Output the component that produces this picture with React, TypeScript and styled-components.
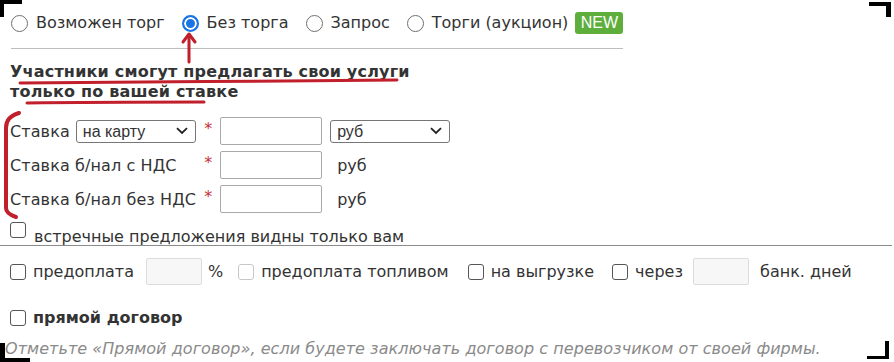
import React from "react";
import styled, { createGlobalStyle } from "styled-components";

const GlobalStyle = createGlobalStyle`
  html, body { margin: 0; padding: 0; background: #fff; }
  body {
    font-family: "DejaVu Sans", Verdana, sans-serif;
    font-size: 16px;
    color: #333;
  }
  * { box-sizing: border-box; }
`;

const Page = styled.div`
  position: relative;
  width: 894px;
  height: 362px;
  overflow: hidden;
  padding-top: 12px;
`;

const RadioRow = styled.div`
  display: flex;
  align-items: center;
  gap: 17px;
  height: 22px;
  padding-left: 11px;
`;

const OptionLabel = styled.label`
  display: inline-flex;
  align-items: center;
  gap: 8px;
  white-space: nowrap;
  line-height: 20px;
`;

const Radio = styled.input.attrs({ type: "radio" })`
  appearance: none;
  margin: 0;
  width: 17px;
  height: 17px;
  border-radius: 50%;
  border: 1px solid #6f6f6f;
  background: #fff;
  flex: none;
  &:checked {
    border: 2px solid #1b74e4;
    background: #1b74e4;
    box-shadow: inset 0 0 0 2px #fff;
  }
`;

const NewBadge = styled.span`
  display: inline-flex;
  align-items: center;
  justify-content: center;
  width: 48px;
  height: 22px;
  margin-left: -10px;
  border-radius: 3px;
  background: #5eae3c;
  color: #fff;
  font-family: "Liberation Sans", Arial, sans-serif;
  font-size: 16px;
`;

const Divider = styled.div`
  margin: 14px 0 0 11px;
  width: 612px;
  height: 1px;
  background: #bdbdbd;
`;

const Heading = styled.div`
  margin: 13px 0 0 10px;
  font-weight: bold;
  line-height: 20px;
  letter-spacing: 0.2px;
  color: #333;
`;

const RateGrid = styled.div`
  display: grid;
  grid-template-columns: auto auto 102px auto;
  justify-content: start;
  column-gap: 8px;
  row-gap: 6px;
  align-items: center;
  margin: 15px 0 0 10px;
`;

const RateLabel = styled.div`
  display: flex;
  align-items: center;
  gap: 6px;
  white-space: nowrap;
  height: 28px;
  letter-spacing: 0.1px;
`;

const Star = styled.span`
  color: #c8323a;
  font-size: 16px;
  position: relative;
  top: -3px;
`;

const SelectWrap = styled.span<{ $w: number }>`
  position: relative;
  display: inline-block;
  width: ${(p) => p.$w}px;
  height: 23px;
`;

const Select = styled.select`
  appearance: none;
  width: 100%;
  height: 100%;
  margin: 0;
  padding: 0 24px 0 6px;
  border: 1px solid #767676;
  border-radius: 3px;
  background: #fff;
  color: #333;
  font-family: "Liberation Sans", Arial, sans-serif;
  font-size: 16px;
`;

const Chevron = styled.svg`
  position: absolute;
  right: 8px;
  top: 7px;
  pointer-events: none;
`;

const TextInput = styled.input`
  width: 102px;
  height: 28px;
  margin: 0;
  border: 1px solid #a9a9a9;
  border-radius: 2px;
  background: #fff;
`;

const Currency = styled.span`
  padding-left: 7px;
`;

const CheckRow = styled.label`
  display: flex;
  align-items: flex-start;
  gap: 8px;
  margin: 15px 0 0 10px;
  line-height: 18px;
  height: 18px;
  white-space: nowrap;
`;

const RaisedCheck = styled.span`
  display: flex;
  margin-top: -6px;
`;

const Check = styled.input.attrs({ type: "checkbox" })<{ $muted?: boolean }>`
  appearance: none;
  margin: 0;
  width: 16px;
  height: 16px;
  flex: none;
  border: 1px solid ${(p) => (p.$muted ? "#c8c8c8" : "#555")};
  border-radius: 3px;
  background: #fff;
`;

const WideRule = styled.div`
  margin-top: -1px;
  width: 892px;
  height: 1px;
  background: #8c8c8c;
`;

const TermsRow = styled.div`
  display: flex;
  align-items: center;
  margin: 12px 0 0 10px;
  height: 27px;
  white-space: nowrap;
`;

const TermItem = styled.label<{ $gap?: number }>`
  display: inline-flex;
  align-items: center;
  gap: 7px;
  margin-right: ${(p) => p.$gap ?? 0}px;
`;

const SmallInput = styled.input<{ $left: number }>`
  width: 56px;
  height: 27px;
  margin: 0 6px 0 ${(p) => p.$left}px;
  border: 1px solid #dcdcdc;
  border-radius: 2px;
  background: #f7f7f7;
`;

const DirectRow = styled.label`
  display: flex;
  align-items: center;
  gap: 7px;
  margin: 23px 0 0 10px;
  font-weight: bold;
  height: 20px;
  line-height: 20px;
`;

const Note = styled.div`
  margin: 11px 0 0 5px;
  font-style: italic;
  color: #8a8a8a;
  white-space: nowrap;
  line-height: 20px;
  letter-spacing: 0.05px;
`;

const Overlay = styled.svg`
  position: absolute;
  left: 0;
  top: 0;
  pointer-events: none;
`;

function ChevronIcon() {
  return (
    <Chevron width="12" height="8" viewBox="0 0 12 8">
      <path d="M1 1.2 L6 6 L11 1.2" fill="none" stroke="#222" strokeWidth="1.8" />
    </Chevron>
  );
}

export default function App() {
  return (
    <>
      <GlobalStyle />
      <Page>
        <RadioRow>
          <OptionLabel>
            <Radio name="bargain" />
            Возможен торг
          </OptionLabel>
          <OptionLabel>
            <Radio name="bargain" defaultChecked />
            Без торга
          </OptionLabel>
          <OptionLabel>
            <Radio name="bargain" />
            Запрос
          </OptionLabel>
          <OptionLabel>
            <Radio name="bargain" />
            Торги (аукцион)
          </OptionLabel>
          <NewBadge>NEW</NewBadge>
        </RadioRow>
        <Divider />
        <Heading>
          Участники смогут предлагать свои услуги
          <br />
          только по вашей ставке
        </Heading>
        <RateGrid>
          <RateLabel>
            Ставка
            <SelectWrap $w={120}>
              <Select defaultValue="card">
                <option value="card">на карту</option>
              </Select>
              <ChevronIcon />
            </SelectWrap>
          </RateLabel>
          <Star>*</Star>
          <TextInput />
          <SelectWrap $w={120}>
            <Select defaultValue="rub">
              <option value="rub">руб</option>
            </Select>
            <ChevronIcon />
          </SelectWrap>

          <RateLabel>Ставка б/нал с НДС</RateLabel>
          <Star>*</Star>
          <TextInput />
          <Currency>руб</Currency>

          <RateLabel>Ставка б/нал без НДС</RateLabel>
          <Star>*</Star>
          <TextInput />
          <Currency>руб</Currency>
        </RateGrid>
        <CheckRow>
          <RaisedCheck>
            <Check />
          </RaisedCheck>
          встречные предложения видны только вам
        </CheckRow>
        <WideRule />
        <TermsRow>
          <TermItem>
            <Check />
            предоплата
          </TermItem>
          <SmallInput $left={12} />
          <TermItem $gap={15}>%</TermItem>
          <TermItem $gap={19}>
            <Check $muted />
            предоплата топливом
          </TermItem>
          <TermItem $gap={18}>
            <Check />
            на выгрузке
          </TermItem>
          <TermItem>
            <Check />
            через
          </TermItem>
          <SmallInput $left={10} />
          <TermItem>&nbsp;банк. дней</TermItem>
        </TermsRow>
        <DirectRow>
          <Check />
          прямой договор
        </DirectRow>
        <Note>
          Отметьте «Прямой договор», если будете заключать договор с перевозчиком от своей фирмы.
        </Note>

        <Overlay width="894" height="362" viewBox="0 0 894 362">
          <g fill="none" stroke="#c21f2c" strokeWidth="3" strokeLinecap="round" strokeLinejoin="round">
            <path d="M189 62 L189 35" />
            <path d="M183 42 L189 34 L195 42" />
            <path d="M20 83 C120 82 300 81 397 80" />
            <path d="M27 103 C90 102 150 102 204 102" />
            <path d="M19 113 C10 116 6 120 6 128 L6 208 C6 212 10 215 16 217" strokeWidth="4" />
          </g>
          <g fill="#000">
            <rect x="0" y="0" width="22" height="4" />
            <rect x="0" y="0" width="4" height="17" />
            <rect x="869" y="2" width="22" height="4" />
            <rect x="886" y="2" width="5" height="15" />
            <rect x="0" y="343" width="5" height="19" />
            <rect x="0" y="358" width="30" height="4" />
            <rect x="885" y="341" width="4" height="18" />
            <rect x="867" y="356" width="22" height="3" />
          </g>
        </Overlay>
      </Page>
    </>
  );
}
